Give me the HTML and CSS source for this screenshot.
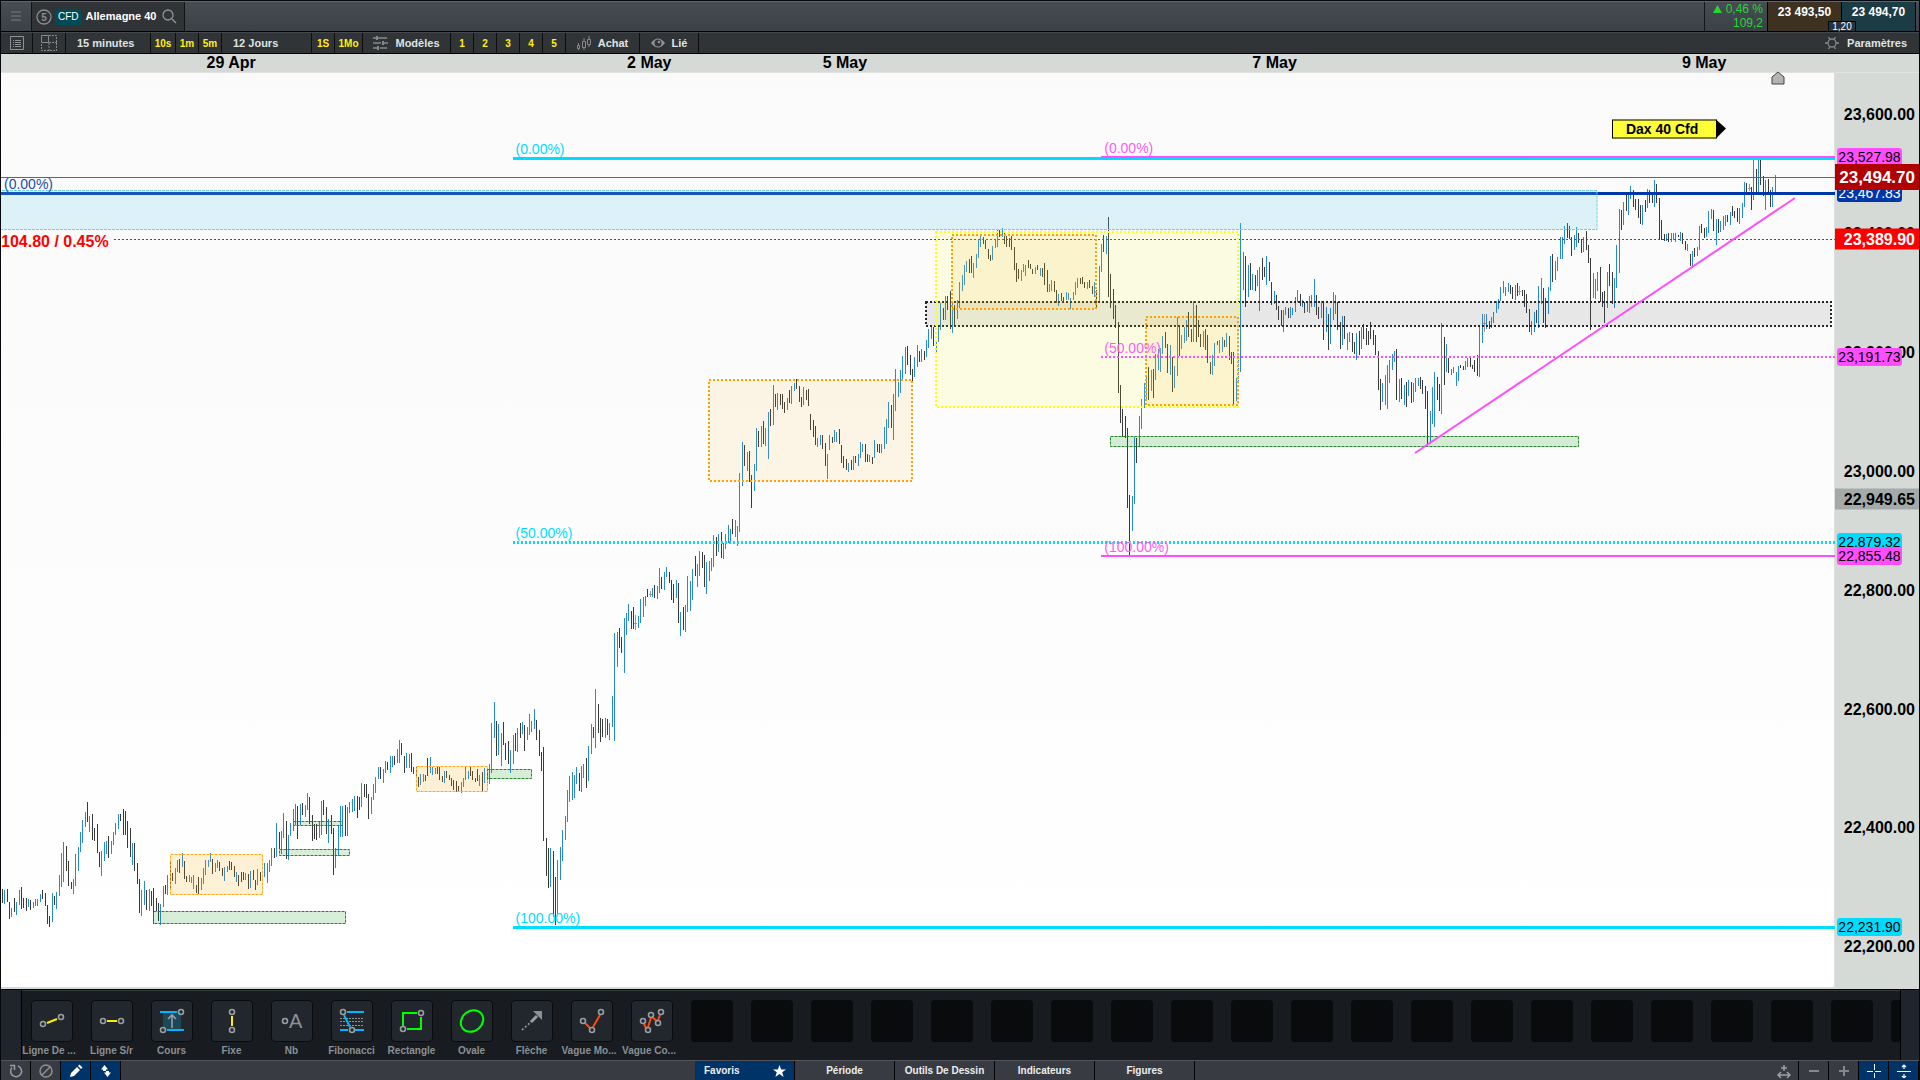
FILE: index.html
```html
<!DOCTYPE html>
<html lang="fr">
<head>
<meta charset="utf-8">
<title>Allemagne 40 - CFD</title>
<link rel="stylesheet" href="styles.css">
</head>
<body>
<div class="app">
  <header class="titlebar">
    <button class="menu-btn" aria-label="Menu"><svg width="10" height="11" viewBox="0 0 10 11"><path d="M0 1h10M0 5h10M0 9h10" stroke="#5d6066" stroke-width="2"/></svg></button>
    <div class="symbol">
      <svg width="16" height="16" viewBox="0 0 16 16"><circle cx="8" cy="8" r="7" fill="none" stroke="#8a8d90" stroke-width="1.3"/><text x="8" y="12" class="badge-num">5</text></svg>
      <span class="cfd">CFD</span>
      <span class="symbol-name">Allemagne 40</span>
      <button class="plain" aria-label="Rechercher"><svg width="15" height="15" viewBox="0 0 15 15"><circle cx="6" cy="6" r="5" fill="none" stroke="#8f9396" stroke-width="1.3"/><path d="M10 10l4 4" stroke="#8f9396" stroke-width="1.5"/></svg></button>
    </div>
    <div class="quotes">
      <div class="change"><span><svg width="9" height="8" viewBox="0 0 9 8"><path d="M4.500 0L9 8H0z" fill="#25d637"/></svg> 0,46 %</span><span class="change-pts">109,2</span></div>
      <button class="quote bid">23 493,50</button>
      <button class="quote ask">23 494,70</button>
      <span class="spread">1,20</span>
    </div>
  </header>

  <nav class="toolbar">
    <button class="w31" aria-label="Liste"><svg width="14" height="14" viewBox="0 0 14 14" fill="none" stroke="#8d9194"><path d="M.5 .5h13v13H.5zM5 4.500h6M5 6.500h6M5 8.500h6M5 10.500h6M3 4.500h1M3 6.500h1M3 8.500h1M3 10.500h1"/></svg></button>
    <button class="w33" aria-label="Disposition"><svg width="16" height="16" viewBox="0 0 16 16" fill="none" stroke="#85898c"><path d="M.5 .5h7v7h-7z"/><path d="M8 .5h7.500v15H.5V8M8 8v8M8 7.500h8" stroke-dasharray="2 1"/></svg></button>
    <button class="w85 lefted">15 minutes</button>
    <button class="quick w25">10s</button>
    <button class="quick w23">1m</button>
    <button class="quick w23">5m</button>
    <button class="w90 lefted">12 Jours</button>
    <button class="quick w23">1S</button>
    <button class="quick w28">1Mo</button>
    <button class="w88"><svg width="15" height="14" viewBox="0 0 15 14" fill="none" stroke="#85898c" stroke-width="1.500"><path d="M0 2h3M5 2h9M0 7h8M11 7h4M0 12h4M7 12h7"/><path d="M4 0v4M10 5v4M5 10v4" stroke-width="2"/></svg>Modèles</button>
    <button class="quick w23">1</button>
    <button class="quick w23">2</button>
    <button class="quick w23">3</button>
    <button class="quick w23">4</button>
    <button class="quick w23">5</button>
    <button class="w74"><svg width="14" height="14" viewBox="0 0 14 14" fill="none" stroke="#85898c"><path d="M.5 9.500h2v3h-2zM5.500 5.500h3v6h-3zM10.500 3.500h3v5h-3zM1.500 7v2M1.500 12.500V14M7 2v3.500M7 11.500V14M12 0v3.500M12 8.500V11"/></svg>Achat</button>
    <button class="w59"><svg width="14" height="12" viewBox="0 0 14 12"><path d="M0 6Q7-3 14 6Q7 15 0 6z" fill="#909497"/><circle cx="7" cy="6" r="3.500" fill="#303437"/><circle cx="8" cy="5" r="1.300" fill="#909497"/></svg>Lié</button>
    <button class="settings"><svg width="14" height="14" viewBox="0 0 14 14" fill="none" stroke="#85898c" stroke-width="1.300"><circle cx="7" cy="7" r="4"/><path d="M0 7h3M11 7h3M3.500 1l1.500 2.500M10.500 1L9 3.500M3.500 13L5 10.500M10.500 13L9 10.500"/></svg>Paramètres</button>
  </nav>

  <main class="chart">
    <div class="dates">
      <span class="date d1">29 Apr</span><span class="date d2">2 May</span><span class="date d3">5 May</span><span class="date d4">7 May</span><span class="date d5">9 May</span>
    </div>
    <div class="plot">
      <svg class="drawing" viewBox="1 73 1834 914" preserveAspectRatio="none" aria-label="Cours Allemagne 40, 15 minutes">
        <rect x="1834" y="73" width="1" height="914" fill="#dedede"/>
        <path id="up" stroke="#2688dc"/>
        <path id="down" stroke="#373b3b"/>
        <path id="flat" stroke="#999" fill="none"/>
        <path class="blue" d="M1 193.500H1835"/>
        <path class="last" d="M1 177.500H1835"/>
        <g class="zones">
          <rect class="z-sky" x="-2" y="190.500" width="1599" height="39"/>
          <path class="prev" d="M114 239.500H1835"/>
          <rect class="z-dark" x="926" y="302" width="905" height="24"/>
          <rect class="z-yellow" x="936" y="232" width="302" height="175"/>
          <rect class="z-orange" x="952" y="235" width="144" height="74"/>
          <rect class="z-orange" x="1146" y="317" width="92" height="88"/>
          <rect class="z-orange" x="709" y="380" width="203" height="101"/>
          <rect class="z-amber" x="170.500" y="854.500" width="92" height="40"/>
          <rect class="z-amber" x="416.500" y="766.500" width="71" height="25"/>
          <rect class="z-green" x="1110.500" y="436.500" width="468" height="10"/>
          <rect class="z-green" x="153.500" y="911.500" width="192" height="12"/>
          <rect class="z-green" x="279.500" y="849.500" width="70" height="6"/>
          <rect class="z-green" x="293.500" y="821.500" width="49" height="4"/>
          <rect class="z-green" x="487.500" y="769.500" width="44" height="9"/>
        </g>
        <g class="cyan"><path d="M513 158.500H1835M513 927.500H1835"/><path d="M513 542.500H1835" stroke-dasharray="2 2"/></g>
        <g class="pink"><path d="M1101 157H1835M1101 556H1835M1415 453L1795 198"/><path d="M1101 357H1835" stroke-dasharray="2 2"/></g>
      </svg>
      <span class="fib c-cyan f-left" style="--price:23543">(0.00%)</span>
      <span class="fib c-cyan f-left" style="--price:22897">(50.00%)</span>
      <span class="fib c-cyan f-left" style="--price:22249">(100.00%)</span>
      <span class="fib c-pink f-right" style="--price:23545">(0.00%)</span>
      <span class="fib c-pink f-right" style="--price:23208">(50.00%)</span>
      <span class="fib c-pink f-right" style="--price:22874">(100.00%)</span>
      <span class="fib c-blue f-edge" style="--price:23484">(0.00%)</span>
      <span class="delta" style="--price:23386">104.80 / 0.45%</span>
      <span class="name-tag" style="--price:23575">Dax 40 Cfd</span>
      <svg class="marker" width="14" height="14" viewBox="0 0 14 14"><path d="M1 6l6-5 6 5v7H1z" fill="#b4b4b4" stroke="#444"/></svg>
    </div>
    <div class="axis">
      <span class="tick" style="--price:23600">23,600.00</span>
      <span class="tick" style="--price:23400">23,400.00</span>
      <span class="tick" style="--price:23200">23,200.00</span>
      <span class="tick" style="--price:23000">23,000.00</span>
      <span class="tick" style="--price:22800">22,800.00</span>
      <span class="tick" style="--price:22600">22,600.00</span>
      <span class="tick" style="--price:22400">22,400.00</span>
      <span class="tick" style="--price:22200">22,200.00</span>
      <span class="tag t-pink" style="--price:23527.98">23,527.98</span>
      <span class="tag t-blue" style="--price:23467.83">23,467.83</span>
      <span class="tag t-pink" style="--price:23191.73">23,191.73</span>
      <span class="tag t-cyan" style="--price:22879.32">22,879.32</span>
      <span class="tag t-pink" style="--price:22857">22,855.48</span>
      <span class="tag t-cyan" style="--price:22231.90">22,231.90</span>
      <span class="price p-last" style="--price:23494.70">23,494.70</span>
      <span class="price p-prev" style="--price:23389.90">23,389.90</span>
      <span class="price p-cursor" style="--price:22953">22,949.65</span>
    </div>
  </main>

  <section class="palette">
    <div class="rail"></div>
    <div class="tools">
      <div class="tool"><button aria-label="Ligne De Tendance"><svg viewBox="0 0 42 42"><path d="M16 23l10-4" class="y"/><g class="n"><circle cx="12" cy="24" r="2.500"/><circle cx="30" cy="17" r="2.500"/></g></svg></button><span class="cut">Ligne De ...</span></div>
      <div class="tool"><button aria-label="Ligne S/r"><svg viewBox="0 0 42 42"><path d="M16 21h10" class="y"/><g class="n"><circle cx="12" cy="21" r="2.500"/><circle cx="30" cy="21" r="2.500"/></g></svg></button><span>Ligne S/r</span></div>
      <div class="tool"><button aria-label="Cours"><svg viewBox="0 0 42 42"><path d="M12 12h18v18H12z" fill="#1d4857"/><path d="M9 12h17M16 30h17" class="b"/><path d="M21 28V15M17 19l4-4 4 4" class="n" stroke-width="2"/><g class="n"><circle cx="30" cy="12" r="2.500"/><circle cx="12" cy="30" r="2.500"/></g></svg></button><span>Cours</span></div>
      <div class="tool"><button aria-label="Fixe"><svg viewBox="0 0 42 42"><path d="M21 16v10" class="y"/><g class="n"><circle cx="21" cy="12" r="2.500"/><circle cx="21" cy="30" r="2.500"/></g></svg></button><span>Fixe</span></div>
      <div class="tool"><button aria-label="Nb"><svg viewBox="0 0 42 42"><circle cx="14" cy="21" r="2.500" class="n"/><text x="18" y="28" class="letter">A</text></svg></button><span>Nb</span></div>
      <div class="tool"><button aria-label="Fibonacci"><svg viewBox="0 0 42 42"><path d="M9 18.500h24M9 21.500h24M9 25.500h24" stroke="#8d9196" stroke-dasharray="2 1"/><path d="M16 12h17M9 30h8M24 30h9M13 15l6 12" class="b"/><g class="n"><circle cx="12" cy="12" r="2.500"/><circle cx="21" cy="30" r="2.500"/></g></svg></button><span>Fibonacci</span></div>
      <div class="tool"><button aria-label="Rectangle"><svg viewBox="0 0 42 42"><path d="M26 13H12v13M30 17v12H16" class="g"/><g class="n"><circle cx="30" cy="13" r="2.500"/><circle cx="12" cy="29" r="2.500"/></g></svg></button><span>Rectangle</span></div>
      <div class="tool"><button aria-label="Ovale"><svg viewBox="0 0 42 42"><ellipse cx="21" cy="21" rx="12" ry="10" transform="rotate(-40 21 21)" class="g"/></svg></button><span>Ovale</span></div>
      <div class="tool"><button aria-label="Flèche"><svg viewBox="0 0 42 42"><path d="M11 30l10-9" class="n" stroke-width="2" stroke-dasharray="2 2"/><path d="M20 22l6-6" class="n thick"/><path d="M31 11v9l-3-3-3-3-3-3z" fill="#8d9196"/></svg></button><span>Flèche</span></div>
      <div class="tool"><button aria-label="Vague Montante"><svg viewBox="0 0 42 42"><path d="M14 23l5 5M22 27l7-12" class="o"/><g class="n"><circle cx="12" cy="21" r="2.500"/><circle cx="21" cy="30" r="2.500"/><circle cx="30" cy="12" r="2.500"/></g></svg></button><span class="cut">Vague Mo...</span></div>
      <div class="tool"><button aria-label="Vague Corrective"><svg viewBox="0 0 42 42"><path d="M13 24l2 4M17 27l3-9M21 17l5 4M27 20l2-5" class="o"/><g class="n"><circle cx="12" cy="21" r="2.500"/><circle cx="17" cy="30" r="2.500"/><circle cx="20" cy="15" r="2.500"/><circle cx="27" cy="23" r="2.500"/><circle cx="30" cy="12" r="2.500"/></g></svg></button><span class="cut">Vague Co...</span></div>
      <div class="slot"></div><div class="slot"></div><div class="slot"></div><div class="slot"></div><div class="slot"></div><div class="slot"></div><div class="slot"></div>
      <div class="slot"></div><div class="slot"></div><div class="slot"></div><div class="slot"></div><div class="slot"></div><div class="slot"></div><div class="slot"></div>
      <div class="slot"></div><div class="slot"></div><div class="slot"></div><div class="slot"></div><div class="slot"></div><div class="slot"></div><div class="slot"></div>
    </div>
    <div class="rail rail-end"></div>
  </section>

  <footer class="bottombar">
    <div class="group">
      <button aria-label="Actualiser"><svg width="14" height="14" viewBox="0 0 14 14" fill="none" stroke="#999da0" stroke-width="1.500"><path d="M3 3.500A5.500 5.500 0 1 0 9 2M1 1.500h4.500V6"/></svg></button>
      <button aria-label="Désactiver"><svg width="14" height="14" viewBox="0 0 14 14" fill="none" stroke="#8d9194" stroke-width="1.500"><circle cx="7" cy="7" r="6"/><path d="M3 11l8-8"/></svg></button>
      <button class="on" aria-label="Dessiner"><svg width="14" height="14" viewBox="0 0 14 14" fill="#fff"><path d="M1 13l1-4 6-6 3 3-6 6zM9 2l1.500-1.500 3 3L12 5z"/></svg></button>
      <button class="on" aria-label="Défilement"><svg width="14" height="14" viewBox="0 0 14 14" fill="#fff"><path d="M2 5.500L5.500 1 9 5.500H7V7H4V5.500zM5 8.500h2V7h3v1.500h2L8.500 13z"/></svg></button>
    </div>
    <div class="tabs">
      <button class="on fav">Favoris<svg width="13" height="12" viewBox="0 0 13 12"><path d="M6.500 0l1.700 4.500H13L9.200 7.300l1.400 4.700-4.100-2.900L2.400 12l1.400-4.700L0 4.500h4.800z" fill="#fff"/></svg></button>
      <button>Période</button>
      <button>Outils De Dessin</button>
      <button>Indicateurs</button>
      <button>Figures</button>
    </div>
    <div class="group end">
      <button aria-label="Ajuster"><svg width="14" height="14" viewBox="0 0 14 14" fill="none" stroke="#9da1a4" stroke-width="1.500"><path d="M7 1v6M4 4h6M1 11h12M4 8l-3 3 3 3M10 8l3 3-3 3"/></svg></button>
      <button aria-label="Réduire"><svg width="12" height="12" viewBox="0 0 12 12"><path d="M1 6h10" stroke="#85898c" stroke-width="2"/></svg></button>
      <button aria-label="Agrandir"><svg width="12" height="12" viewBox="0 0 12 12"><path d="M1 6h10M6 1v10" stroke="#85898c" stroke-width="2"/></svg></button>
      <button class="on" aria-label="Réticule"><svg width="14" height="14" viewBox="0 0 14 14"><path d="M0 7.500h6M8 7.500h6M7.500 0v6M7.500 9v5" stroke="#fff"/></svg></button>
      <button class="on" aria-label="Échelle"><svg width="14" height="14" viewBox="0 0 14 14" fill="none" stroke="#fff"><path d="M0 7.500h14M7 1v4M7 10v4M5 3l2-2 2 2M5 12l2 2 2-2" stroke-width="1.200"/></svg></button>
    </div>
  </footer>
</div>
<script src="chart.js"></script>
</body>
</html>
```
FILE: styles.css
```css
* { box-sizing: border-box; }
body { margin: 0; background: #06080d; font-family: "Liberation Sans", Arial, sans-serif; color: #dfe3e3; }
button { border: 0; margin: 0; padding: 0; background: none; font: inherit; color: inherit; display: flex; align-items: center; justify-content: center; }
.app { display: flex; flex-direction: column; min-height: 100vh; border: solid #06080d; border-width: 1px 1px 0; }

.titlebar { display: flex; height: 31px; border-top: 1px solid #60646b; border-bottom: 1px solid #000; background: linear-gradient(#474b52, #3c4148); }
.menu-btn { width: 31px; border-right: 1px solid #111417; }
.symbol { display: flex; align-items: center; gap: 3px; width: 153px; padding-left: 4px; background: #303437; border-right: 1px solid #111417; }
.badge-num { font: bold 10px "Liberation Sans", Arial, sans-serif; fill: #8a8d90; text-anchor: middle; }
.cfd { height: 16px; line-height: 16px; padding: 0 3px; border-radius: 3px; background: #004b55; color: #fff; font-size: 10px; }
.symbol-name { font-weight: bold; font-size: 11px; line-height: 12px; color: #fff; padding: 0 3px 1px 1px; white-space: nowrap; }
.quotes { position: relative; display: flex; margin-left: auto; border-left: 1px solid #14171a; }
.change { width: 63px; padding-right: 4px; display: flex; flex-direction: column; text-align: right; font-size: 12px; line-height: 15px; color: #25d637; border-right: 1px solid #000; white-space: nowrap; }
.change-pts { line-height: 12px; }
.quote { width: 74px; align-items: flex-start; padding-top: 3px; font-weight: bold; font-size: 12px; line-height: 14px; color: #fff; border-right: 1px solid #000; }
.bid { background: #3d3121; }
.ask { background: #1b3b45; margin-right: 3px; }
.spread { position: absolute; right: 63px; bottom: 0; width: 28px; height: 10px; background: #26333d; border: solid #050708; border-width: 1px 1px 0; font-size: 10px; line-height: 10px; text-align: center; color: #fff; }

.toolbar { display: flex; height: 22px; background: #303437; border-top: 1px solid #44484c; border-bottom: 1px solid #000; font-weight: bold; font-size: 11px; }
.toolbar button { gap: 7px; padding-bottom: 1px; border-right: 1px solid #0b0d0f; white-space: nowrap; flex: none; }
.toolbar .quick { color: #ffef12; font-size: 10px; padding: 1px 0 0; }
.toolbar .lefted { justify-content: flex-start; padding-left: 11px; }
.toolbar .settings { gap: 8px; margin-left: auto; padding-right: 12px; border: 0; }
.w23 { width: 23px; } .w25 { width: 25px; } .w28 { width: 28px; } .w31 { width: 32px; } .w33 { width: 33px; }
.w59 { width: 59px; } .w74 { width: 74px; } .w85 { width: 85px; } .w88 { width: 88px; } .w90 { width: 90px; }

.chart { flex: 1; display: grid; grid-template: 19px 1fr 2px / 1fr 84px; background: #d5dad6; }
.dates { grid-column: 1 / 3; position: relative; font-weight: bold; font-size: 16px; line-height: 17px; color: #000; border-bottom: 1px solid #e2e2e2; }
.date { position: absolute; transform: translateX(-50%); white-space: nowrap; }
.d1 { left: 12%; } .d2 { left: 33.8%; } .d3 { left: 44%; } .d4 { left: 66.4%; } .d5 { left: 88.8%; }
.plot { position: relative; background: linear-gradient(#fafafa, #fff); }
.drawing { position: absolute; inset: 0; width: 100%; height: 100%; overflow: hidden; }
.blue { stroke: #0037a8; stroke-width: 3; }
.last { stroke: #e8301a; }
.prev { stroke: #d81818; stroke-dasharray: 2 2; }
.cyan { stroke: #00dcff; stroke-width: 3; }
.pink { stroke: #ff4dff; stroke-width: 2; }
.z-sky { fill: rgba(100, 205, 240, .2); stroke: #74cce6; stroke-dasharray: 3 1; }
.z-dark { fill: rgba(90, 90, 90, .12); stroke: #262626; stroke-width: 2; stroke-dasharray: 2 2; }
.z-yellow { fill: rgba(255, 255, 0, .1); stroke: #ff0; stroke-width: 2; stroke-dasharray: 2 2; }
.z-orange { fill: rgba(255, 165, 0, .09); stroke: #ffa200; stroke-width: 2; stroke-dasharray: 2 2; }
.z-amber { fill: rgba(255, 165, 0, .16); stroke: #ffa820; stroke-dasharray: 3 1; }
.z-green { fill: rgba(0, 140, 0, .15); stroke: #22882a; stroke-dasharray: 3 1; }

.fib, .delta, .name-tag, .tick, .tag, .price { position: absolute; top: calc((23669 - var(--price)) / 1537.4 * 100%); transform: translateY(-50%); white-space: nowrap; }
.fib { padding: 2px 0 0 1px; font-size: 14px; line-height: 16px; }
.f-left { left: 28%; } .f-right { left: 60.1%; } .f-edge { left: 2px; }
.c-cyan { color: #00dcff; } .c-pink { color: #ff5cf4; } .c-blue { color: #1b4bab; }
.delta { left: 0; padding-top: 2px; font-weight: bold; font-size: 16px; line-height: 18px; color: #f00; }
.name-tag { left: 87.85%; width: 105px; height: 19px; padding-right: 5px; border: 1px solid #000; background: #ffff38; color: #000; font-weight: bold; font-size: 14px; line-height: 17px; text-align: center; }
.name-tag::after { content: ""; position: absolute; left: 103px; top: -1px; border: solid transparent; border-width: 9px 0 10px 10px; border-left-color: #000; }
.marker { position: absolute; left: 96.5%; top: -2px; }

.axis { position: relative; color: #000; }
.tick { right: 4px; padding-top: 2px; font-weight: bold; font-size: 16px; line-height: 18px; }
.tag { left: 2px; width: 65px; height: 18px; border-radius: 3px; font-size: 14px; line-height: 18px; text-align: center; }
.t-pink { background: #ff4dff; } .t-cyan { background: #00dcff; } .t-blue { background: #0037a8; color: #fff; }
.price { left: 0; right: 0; padding-right: 4px; font-weight: bold; font-size: 16px; line-height: 21px; text-align: right; }
.p-last { padding-top: 1px; background: #b00000; color: #fff; font-size: 17px; line-height: 25px; }
.p-prev { background: #f00; color: #fff; }
.p-cursor { background: #a4aaaa; }

.palette { display: flex; height: 71px; border-top: 1px solid #000; background: #181c20; box-shadow: inset 0 1px #333a3e; }
.rail { flex: none; width: 21px; background: #20242c; border-right: 1px solid #000; }
.rail-end { width: 19px; border-right: 0; border-left: 1px solid #000; }
.tools { flex: 1; min-width: 0; display: flex; overflow: hidden; padding: 10px 0 0; }
.tool { flex: none; width: 60px; display: flex; flex-direction: column; align-items: center; gap: 2px; font-weight: bold; font-size: 10px; line-height: 12px; color: #8a8f95; white-space: nowrap; }
.tool button, .slot { width: 42px; height: 42px; border-radius: 4px; }
.tool button { background: #22272e; border: 1px solid #090b0d; }
.tool svg { width: 42px; height: 42px; flex: none; }
.tool span { padding-top: 1px; padding-right: 1px; }
.tool .cut { padding-right: 6px; }
.slot { flex: none; margin: 0 9px; background: #090b0d; }
.y, .b, .g, .o, .n { fill: none; stroke-width: 2; }
.y { stroke: #ffee00; } .b { stroke: #00b7ff; } .g { stroke: #0f0; } .o { stroke: #ff4a10; }
.n { stroke: #9a9ea2; stroke-width: 1.6; }
.n.thick { stroke-width: 3; }
.letter { font: 20px "Liberation Sans", Arial, sans-serif; fill: #8d9196; }

.bottombar { display: grid; grid-template-columns: 694fr 500px 724fr; height: 20px; background: #383b42; font-weight: bold; font-size: 10px; color: #eceeee; border-top: 1px solid #52565c; }
.group, .tabs { display: flex; }
.group button { width: 30px; border-right: 1px solid #000; }
.end { justify-content: flex-end; }
.tabs button { width: 100px; border-right: 1px solid #000; white-space: nowrap; }
.bottombar .on { background: #003468; }
.tabs .fav { justify-content: space-between; padding: 0 8px 0 9px; }
```
FILE: chart.js
```js
// Each run of bars: origin, units per pixel, then direction (u/d/g), x, high, low.
const runs = [
  [0, 700, 2.8, 3, "d7,567,609 u13,570,612 d21,567,605 d26,605,657 u32,624,651 d40,594,636 u46,606,645 u54,570,615 d60,561,627 d66,594,624 d74,594,633 u80,597,621 d85,600,630 u93,606,624 u99,597,618 u105,597,618 u113,582,606 d119,570,597 d127,579,618 d133,615,672 d138,648,681 u147,579,666 d152,588,615 u158,576,627 u166,525,588 u172,459,561 u178,426,546 d186,438,513 d191,483,558 d200,546,567 u205,537,582 u211,462,558 u219,441,513 u225,396,457 u231,360,429 u239,336,381 d245,306,366 u250,348,396 d259,342,420 d264,384,423 d273,372,459 d278,456,502 u284,453,528 u292,426,483 u298,423,462 d304,408,474 u312,423,462 u317,396,435 u323,369,405 u332,342,387 d337,342,363 d346,327,405 d351,333,405 d357,363,444 d365,384,471 u371,429,495 d376,429,513 d385,489,552 d390,537,639 u396,570,648 u404,543,615 d410,570,630 u418,567,633 d424,573,618 d430,564,672 d438,594,633 d444,609,663 u449,612,675 u457,558,621 d463,555,582 u469,525,585 d477,486,564 d483,519,543 u491,504,552 u497,480,516 d502,477,519 u511,459,501 d516,483,537 d522,528,546 u530,525,546 u536,531,549 u541,525,567 d550,555,579 d555,531,582 u564,534,570 u569,504,552 u575,480,525 u583,480,501 u589,459,486 d595,477,522 u603,489,516 u609,480,504 d614,486,513 d622,504,528 u628,501,543 u637,498,516 d642,483,510 d648,486,510 d656,498,531 u662,516,546 d668,525,558 d676,516,546 d682,516,540 u687,519,540 d695,522,567 u701,513,564 d709,510,540 d715,540,570 u721,507,555 d729,516,543 u740,489,531 u748,489,549 u754,480,516 u760,444,498 d768,444,474 u774,369,471 d782,396,447 u788,393,462 u793,339,414 d802,363,477 u807,405,480 u813,369,408 u821,327,393 u827,312,375 d832,318,417 u841,312,375 d847,309,345 u855,315,351 u861,279,330 d866,291,372 d875,345,423 d880,372,417 d886,372,420 u894,366,414 u900,303,405 d905,300,345 d914,321,402 u920,357,429 d928,345,402 d933,384,525 u939,444,504 u947,378,468 u953,318,411 u959,318,411 d967,315,408 u973,321,408 u978,306,339 u987,297,336 u992,288,333 d1001,288,354 d1006,291,330 u1012,249,321 d1020,252,291 d1026,252,294 d1031,282,357 u1040,291,342 u1045,252,300 u1051,231,279 u1060,201,237 d1065,201,237 u1073,207,249 u1079,183,219 d1085,186,210 u1093,168,219 u1099,168,201 d1104,168,195 u1113,147,189 u1118,120,189 d1124,129,165 d1132,168,219 u1138,159,204 u1146,162,204 d1152,159,216 d1157,201,222 d1166,201,231 d1171,231,261 u1177,222,255 u1185,222,246 d1191,225,243 d1197,174,228 u1205,171,219 u1211,201,225 u1219,204,222 d1225,201,222 d1230,201,240 d1238,228,246 u1244,213,249 d1250,213,234 d1258,225,240 d1264,234,258 d1269,240,270 d1278,243,276 d1283,258,273 u1292,246,279 u1297,234,261 u1303,201,240 u1311,213,237 d1317,201,228 d1323,213,240 d1331,234,246 d1337,207,243 u1342,225,258 d1350,216,273 u1356,204,249 d1364,225,250 u1370,192,252"],
  [470, 550, 3, 3, "u64,519,669 u73,456,564 d79,513,618 u85,522,615 u94,549,648 d100,516,585 d106,579,630 d115,573,642 u121,600,669 u130,555,642 d136,549,603 u142,534,606 d151,519,564 u157,516,552 d163,525,603 u172,531,570 u178,492,555 u184,513,546 u193,477,537 d199,510,570 d208,540,618 d214,606,663 d220,591,873 d229,864,978 d235,894,1014 u241,894,1011 d250,903,1101 d256,981,1125 u262,930,1092 u271,891,990 u277,840,933 u286,798,870 u292,720,816 u298,678,756 u307,666,750 u313,675,744 u319,651,702 d328,669,723 u334,648,726 u340,642,684 d349,624,714 u355,588,693 u364,522,612 d370,531,564 u376,417,594 d385,462,549 d391,504,576 d397,507,561 u406,504,564 d412,507,555 u418,519,570 u427,438,531 u433,249,573 u442,246,351 d448,234,294 d454,261,309 u463,204,369"],
  [500, 340, 3, 3, "u379,819,885 u385,792,843 d394,813,867 d400,801,867 g406,825,870 u415,828,864 u421,777,849 u430,771,831 u436,768,798 d442,747,771 g451,753,771 u457,744,771 d463,735,774 u472,738,777 u478,684,759 d484,711,747 u493,696,750 u499,681,711 d508,696,729 d514,720,780 d520,732,789 u529,720,774 d535,729,849 u541,816,888 d550,801,870 u556,795,876 u562,708,816 u571,723,813 u577,687,780 d586,648,708 u592,672,741 u598,633,708 d607,636,684 d613,645,741 u619,666,762 u628,663,723 u634,654,693 u640,585,681 d649,591,648 u655,582,636 d664,576,654 u670,609,657 u676,582,627 u685,555,609 u691,567,609 d697,537,582 u706,540,591 u712,558,618 u718,399,576 u727,306,438 d733,315,378 u742,336,393 d748,333,426 d754,405,504 u763,372,453 u769,264,393 d775,273,321 u784,258,321 d790,243,312 u796,264,318 u805,216,357 d811,207,258 u820,135,255 d826,162,201 u832,159,210 d841,162,195 d847,162,207 d853,186,219 u862,174,210 d868,150,189 u874,138,192 u883,129,153 d889,117,147 d898,138,186 d904,171,201 u910,141,195 d919,150,180 d925,147,198 d931,222,270 d940,240,291 d946,258,315 u952,294,321 u961,285,315 d967,285,327 d976,309,378 u982,342,417 u988,285,330 d997,291,309 u1003,270,306 u1009,276,306 d1018,267,312 d1024,315,369 d1030,348,384 d1039,357,390 u1045,369,396 d1054,360,390 u1060,348,390 d1066,348,369 u1075,342,378 u1081,306,354 u1087,312,336 d1096,312,366 d1102,342,366 u1108,345,366 d1117,351,372 u1123,300,354 d1132,312,336 d1138,312,339 u1144,312,339 u1153,261,327 u1159,237,312 u1165,186,264 d1174,195,264 u1180,162,300 u1186,87,213 u1195,126,171"],
  [900, 200, 3, 3, "u1,510,578 u7,468,540 u16,441,522 d22,438,495 d31,465,525 d37,507,543 u43,471,531 u52,435,501 d58,453,486 u64,447,486 d73,453,480 u79,420,471 u85,387,444 u94,378,417 d100,381,438 u109,426,456 u115,378,426 u121,309,390 d130,324,360 u136,288,360 d142,288,330 d151,273,387 u157,309,399 d163,315,378 u172,300,357 u178,246,324 u187,225,273 u193,195,255 u199,183,216 d208,177,219 d214,168,219 u220,189,234 u229,162,204 u235,120,174 u241,108,141 d250,111,132 d256,120,147 d265,147,177 d271,165,183 u277,138,180 u286,117,144 u292,90,141 d298,90,111 u307,84,111 d313,99,132 d319,108,141 d328,114,141 d334,108,150 d343,141,210 d349,189,246 d355,207,237 u364,210,243 u370,192,216 u376,195,228 d385,180,204 d391,192,207 d397,207,222 u406,201,222 d412,195,210 u421,204,228 d427,204,231 d433,189,255 d442,210,276 u448,252,276 u454,240,273 d463,243,276 d469,270,309 u475,282,318 d484,279,303 d490,291,306 u499,276,300 u505,279,300 u511,294,327 u520,276,300 u526,246,285 u532,234,264 d541,234,252 d547,231,252 d553,246,264 u562,246,267 d568,240,264 d577,258,282 u583,246,291 d589,270,327 u598,198,306 u604,132,216 d610,105,156 u619,108,162 d625,51,291 d631,222,324 d640,267,357 d646,315,384 d655,366,579 d661,555,669 d667,627,711 d676,648,714 d682,684,924 d688,885,1066 u697,888,993 u703,711,912 d709,714,789 u718,648,741 u724,597,687 u733,549,624 u739,531,597 d745,501,600 u754,510,573 d760,507,594 u766,462,540 u775,447,510 u781,444,516 u787,408,462 d796,396,444 d802,432,519 u811,435,525 d817,471,576 u823,498,564 u832,351,528 d838,378,468 u844,405,447 u853,381,429 u859,360,423 d865,336,411 d874,387,426 u880,303,426 d889,315,426 d895,360,411 d901,402,441 u910,393,441 d916,387,450 d922,405,489 d931,486,522 u937,465,525 u943,429,498 d952,423,435 u958,420,459 u967,411,456 d973,420,441 u979,399,441 d988,408,480 d994,456,492 d1000,456,612 u1009,534,603 u1015,459,546 u1021,69,516 u1030,156,270 d1036,168,321 u1045,195,291 d1051,189,270 u1057,222,270 d1066,225,273 u1072,210,258 u1078,201,333 d1087,174,240 d1093,201,231 u1099,168,255 d1108,186,243 d1114,246,315 u1123,273,312 d1129,285,330 d1135,318,360 d1144,330,378 u1150,330,396 u1156,321,345 d1165,324,354 u1171,321,354 u1177,324,345 u1186,291,336 u1192,270,306 d1201,282,318 u1207,300,321 d1213,306,339 u1222,306,336 u1228,288,339 u1234,285,321 u1243,237,321 d1249,285,345 d1255,321,357 u1264,303,354 d1270,303,420 u1279,321,396 d1285,342,450 u1291,324,432 u1300,276,360 u1306,285,342 d1312,306,390 d1321,366,447 u1327,348,435 d1333,348,417 u1342,399,450 u1348,396,426 d1357,399,456 d1363,426,462 u1369,399,480 d1378,393,465 u1384,381,447 d1390,372,417 d1399,384,435 d1405,393,435 d1411,366,417 d1420,390,435 d1426,405,465 d1435,453,570 d1441,537,630 u1447,549,606 u1456,525,615 u1462,495,627 u1468,480,549 u1477,462,510 u1483,453,486 d1489,447,600 u1498,537,606"],
  [1370, 140, 2.851, 3, "d90,714,777 u98,735,795 d104,726,800 u109,720,768 d118,726,789 u124,729,786 u130,714,756 u138,714,738 d144,711,747 d150,720,762 d158,738,807 d164,753,915 u172,813,906 u178,741,852 u183,696,861 d192,711,780 d198,732,813 u203,549,822 d212,591,735 u218,612,696 d223,654,699 u232,687,705 u238,681,699 u246,696,738 u252,678,723 d258,675,684 d266,678,690 u272,663,690 u278,654,681 d286,654,681 d292,675,687 d298,660,696 d306,645,708 u312,558,711 u320,522,609 g326,522,576 u332,522,567 d340,543,567 u346,531,564 u352,516,549 u360,483,519 u366,477,507 u372,441,483 u380,423,459 u386,441,468 u394,429,456 d400,435,462 d406,441,477 u414,435,480 d420,429,468 g426,438,465 d434,450,468 d440,450,501 d446,462,519 d454,507,576 u460,543,585 u468,516,576 d474,510,549 u480,438,564 u488,414,492 d494,444,549 d500,474,564 u508,441,522 u514,348,453 d520,342,426 u528,363,420 u534,351,393 u543,291,357 u548,291,357 u554,258,312 d563,249,294 d568,258,297 d574,291,348 u583,285,330 u588,261,321 d594,279,309 d603,297,339 u608,291,336 d617,273,330 d622,315,369 d628,354,570 u637,399,474 u642,417,477 u648,396,453 d657,381,486 d662,456,501 d668,453,549 u677,396,504 d682,372,438 d691,396,492 u697,414,504 u702,315,444 u711,207,399 d717,210,270 u722,186,255 d731,165,213 u737,156,225 u742,138,177 d751,150,201 d757,177,210 d765,177,234 d771,195,252 u777,195,255 d785,180,216 u791,147,204 d797,150,189 d805,159,189 u811,120,201 d817,132,189 d825,174,300 d831,240,300 d839,282,303 u845,282,303 d851,279,306 u859,279,306 u865,279,300 u871,279,306 d879,285,291 u885,276,303 d891,279,312 d899,303,330 u905,312,333 d913,342,378 u919,333,384 d925,324,351 u933,321,348 u939,258,330 d945,252,279 d953,264,294 u959,261,291 u965,213,279 u973,207,237 d979,210,273 u987,237,315 d993,237,279 u999,243,276 u1007,228,270 u1013,225,258 d1019,225,246 u1027,216,255 d1033,198,228 d1039,213,234 d1047,204,246 u1053,204,252 u1061,189,234 u1067,126,201 d1073,129,156 g1081,132,153 d1087,141,210 u1093,60,180 d1101,87,156 u1107,60,156 d1113,60,135 d1121,108,168 u1127,120,210 d1136,117,165 d1141,150,201 u1147,141,201 u1156,105,156"]
];

const paths = { u: "", d: "", g: "" };
for (const [x0, y0, sx, sy, bars] of runs) {
  for (const bar of bars.split(" ")) {
    const [px, high, low] = bar.slice(1).split(",").map(Number);
    const x = x0 + Math.floor(px / sx) + 0.5;
    const top = y0 + Math.round(high / sy);
    const bottom = y0 + Math.round(low / sy);
    paths[bar[0]] += `M${x} ${top}V${bottom}`;
    if (bar[0] === "g") paths.g += `M${x - 1.5} ${Math.round((top + bottom) / 2) + 0.5}h3`;
  }
}
document.getElementById("up").setAttribute("d", paths.u);
document.getElementById("down").setAttribute("d", paths.d);
document.getElementById("flat").setAttribute("d", paths.g);
```
